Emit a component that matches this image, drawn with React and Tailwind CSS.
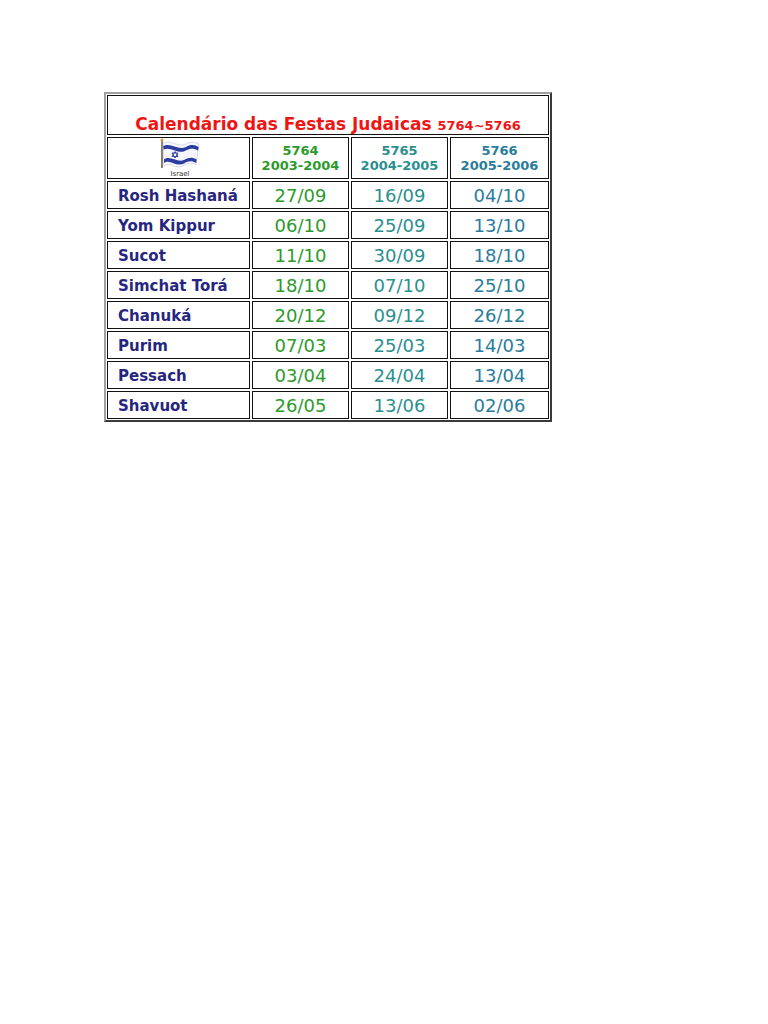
import React from 'react';

const rows = [
  ['Rosh Hashaná', '27/09', '16/09', '04/10'],
  ['Yom Kippur', '06/10', '25/09', '13/10'],
  ['Sucot', '11/10', '30/09', '18/10'],
  ['Simchat Torá', '18/10', '07/10', '25/10'],
  ['Chanuká', '20/12', '09/12', '26/12'],
  ['Purim', '07/03', '25/03', '14/03'],
  ['Pessach', '03/04', '24/04', '13/04'],
  ['Shavuot', '26/05', '13/06', '02/06'],
];

const colColors = ['text-[#2b9b2b]', 'text-[#2a8f8f]', 'text-[#2a7c9c]'];

const Flag = () => (
  <svg width="46" height="40" viewBox="0 0 46 40">
    <line x1="6" y1="2" x2="6" y2="30" stroke="#8a8070" strokeWidth="2" />
    <circle cx="6" cy="2" r="1.5" fill="#c9a040" />
    <path d="M7 5 C15 1 22 10 30 6 C35 3 39 4 43 6 L40 27 C36 24 31 25 27 28 C20 32 13 23 8 28 Z" fill="#f4f6fb" stroke="#b8bccc" strokeWidth="0.5" />
    <path d="M7.2 8 C15 4 22 13 30 9 C35 6 39 7 42.6 9 L42.1 12.5 C38 10 34 10 30 12.5 C22 17 15 8 7.6 11.5 Z" fill="#2a3c9e" />
    <path d="M8 21.5 C14 17 21 25 28 22 C33 19 37 19 40.7 21.5 L40.2 25 C36 22.5 32 23 28 25.5 C20 29.5 14 20.5 8 25 Z" fill="#2a3c9e" />
    <polygon points="19,13.5 22,18.5 16,18.5" fill="none" stroke="#2a3c9e" strokeWidth="0.9" />
    <polygon points="19,20 22,15 16,15" fill="none" stroke="#2a3c9e" strokeWidth="0.9" />
    <text x="24" y="38" textAnchor="middle" fontSize="7" fill="#333" fontFamily="'DejaVu Sans', sans-serif">Israel</text>
  </svg>
);

const Cell = ({ className = '', children }) => (
  <div className={'border border-[#111] bg-white flex items-center ' + className}>{children}</div>
);

export default function App() {
  return (
    <div className="min-h-[1024px] bg-white pl-[104px] pt-[92px] font-['DejaVu_Sans',Verdana,sans-serif]">
      <div className="w-[448px] border-2 border-t-[#a0a0a0] border-l-[#a0a0a0] border-r-[#3a3a3a] border-b-[#3a3a3a] p-[1px]">
        <div className="grid grid-cols-[143px_97px_97px_99px] gap-[2px]">
          <Cell className="col-span-4 h-[40px] justify-center items-end pb-[1px]">
            <span className="text-[17px] font-bold text-[#ee1515] leading-none">
              Calendário das Festas Judaicas{' '}
              <span className="text-[13px]">5764~5766</span>
            </span>
          </Cell>
          <Cell className="h-[42px] justify-center">
            <Flag />
          </Cell>
          {[
            ['5764', '2003-2004'],
            ['5765', '2004-2005'],
            ['5766', '2005-2006'],
          ].map(([a, b], i) => (
            <Cell key={a} className={'h-[42px] flex-col justify-center text-[13px] font-bold leading-[15px] ' + colColors[i]}>
              <span>{a}</span>
              <span>{b}</span>
            </Cell>
          ))}
          {rows.map(([name, ...dates]) => (
            <React.Fragment key={name}>
              <Cell className="h-[28px] pl-[10px] pt-[2px] text-[15px] font-bold text-[#262680]">{name}</Cell>
              {dates.map((d, i) => (
                <Cell key={i} className={'h-[28px] justify-center text-[18px] ' + colColors[i]}>{d}</Cell>
              ))}
            </React.Fragment>
          ))}
        </div>
      </div>
    </div>
  );
}
